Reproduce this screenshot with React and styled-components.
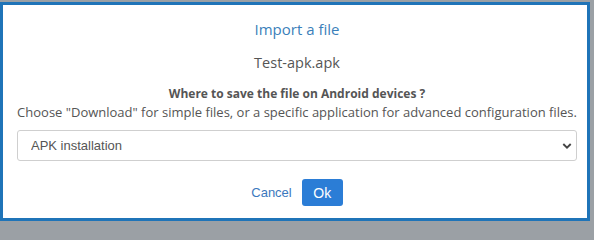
import React, { useState } from 'react';
import styled, { createGlobalStyle } from 'styled-components';

const GlobalStyle = createGlobalStyle`
  html, body {
    margin: 0;
    padding: 0;
    background: #9ba0a5;
    height: 224px;
    overflow: hidden;
  }
  * {
    box-sizing: border-box;
  }
`;

const options = ['Download', 'APK installation'];

const App = () => {
  const [target, setTarget] = useState('APK installation');

  return (
    <>
      <GlobalStyle />
      <Backdrop>
        <Modal>
          <Title>Import a file</Title>
          <FileName>Test-apk.apk</FileName>
          <Question>Where to save the file on Android devices ?</Question>
          <Hint>
            Choose "Download" for simple files, or a specific application for advanced
            configuration files.
          </Hint>
          <SelectWrap>
            <Select value={target} onChange={(e) => setTarget(e.target.value)}>
              {options.map((o) => (
                <option key={o} value={o}>
                  {o}
                </option>
              ))}
            </Select>
            <Chevron viewBox="0 0 10 8" aria-hidden="true">
              <path d="M1.3 2 L5 5.6 L8.7 2" fill="none" stroke="#444" strokeWidth="1.9" />
            </Chevron>
          </SelectWrap>
          <Actions>
            <CancelLink href="#">Cancel</CancelLink>
            <OkButton type="button">Ok</OkButton>
          </Actions>
        </Modal>
      </Backdrop>
    </>
  );
};

export default App;

const Backdrop = styled.div`
  padding: 2px 4px 0 0;
  height: 224px;
`;

const Modal = styled.div`
  width: 590px;
  height: 219px;
  background: #fff;
  border: 3px solid #1f74b8;
  display: flex;
  flex-direction: column;
  align-items: center;
  padding: 13px 10px 0 14px;
  font-family: 'Open Sans', 'Liberation Sans', sans-serif;
  color: #555;
`;

const Title = styled.h3`
  margin: 0;
  font-size: 15px;
  font-weight: 400;
  color: #3b7fba;
  line-height: 22px;
`;

const FileName = styled.div`
  margin-top: 13px;
  font-size: 14.5px;
  line-height: 20px;
  color: #555;
`;

const Question = styled.div`
  margin-top: 12px;
  font-size: 12px;
  font-weight: 700;
  line-height: 17px;
`;

const Hint = styled.div`
  margin-top: 2px;
  font-size: 13px;
  line-height: 17px;
  white-space: nowrap;
`;

const SelectWrap = styled.div`
  position: relative;
  align-self: stretch;
  margin-top: 9px;
`;

const Select = styled.select`
  width: 100%;
  height: 31px;
  appearance: none;
  border: 1px solid #cfcfcf;
  border-radius: 3px;
  background: #fff;
  padding: 0 30px 0 13px;
  font-family: 'Liberation Sans', Arial, sans-serif;
  font-size: 13px;
  color: #555;
  outline: none;
`;

const Chevron = styled.svg`
  position: absolute;
  right: 5px;
  top: 12px;
  width: 10px;
  height: 8px;
  pointer-events: none;
`;

const Actions = styled.div`
  display: flex;
  align-items: center;
  gap: 10px;
  margin-top: 18px;
`;

const CancelLink = styled.a`
  font-family: 'Liberation Sans', Arial, sans-serif;
  font-size: 13px;
  color: #3b78bd;
  text-decoration: none;
`;

const OkButton = styled.button`
  width: 41px;
  height: 27px;
  border: none;
  border-radius: 3px;
  background: #2b7dd6;
  color: #fff;
  font-family: 'Liberation Sans', Arial, sans-serif;
  font-size: 14px;
  padding: 0;
  cursor: pointer;
`;
